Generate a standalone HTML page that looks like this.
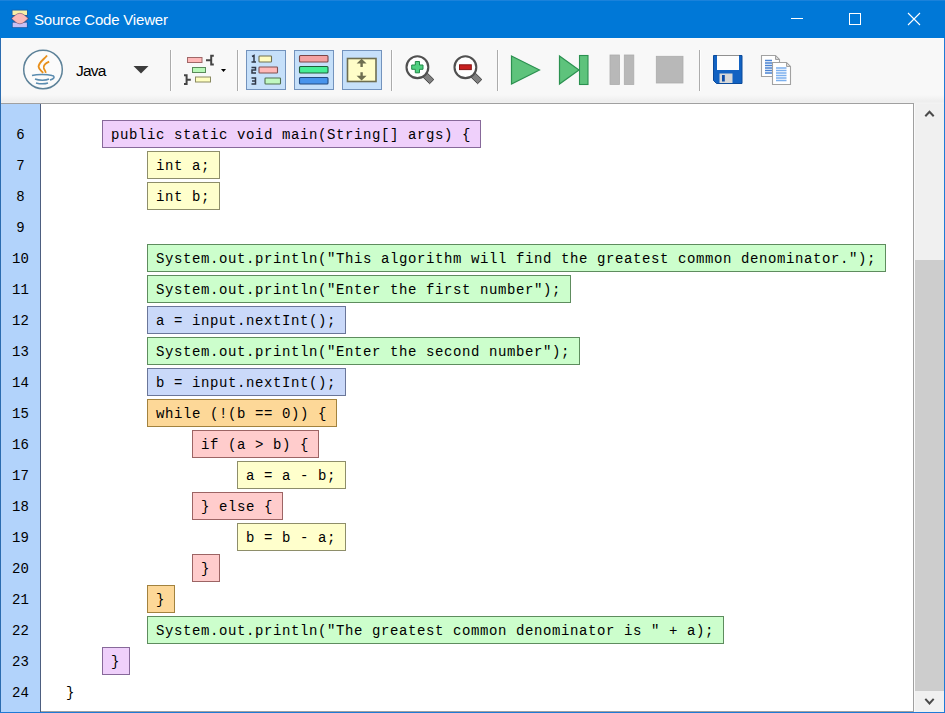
<!DOCTYPE html>
<html><head><meta charset="utf-8">
<style>
*{margin:0;padding:0;box-sizing:border-box}
html,body{width:945px;height:713px;overflow:hidden;background:#fff}
body{position:relative;font-family:"Liberation Sans",sans-serif}
.abs{position:absolute}
#title{left:0;top:0;width:945px;height:38px;background:#0078d7;border-top:1px solid #1a82db}
#ttext{left:34px;top:11px;color:#fff;font-size:15px;line-height:18px;white-space:nowrap;letter-spacing:-0.2px}
#frameL{left:0;top:38px;width:1px;height:675px;background:#2b6cb0}
#frameR{left:944px;top:38px;width:1px;height:675px;background:#1f7ad6}
#frameB{left:0;top:712px;width:945px;height:1px;background:#1f7ad6}
#toolbar{left:1px;top:38px;width:943px;height:66px;background:linear-gradient(#fdfdfd 0px,#f8f8f8 2px,#f8f8f8 57px,#eeeeee 63px,#eeeeee 64px,#f2f2f2 65px)}
#tbline{left:1px;top:103px;width:913px;height:1px;background:#a0a0a0}
#gutter{left:1px;top:104px;width:39px;height:608px;background:#b2d3fb}
#gline{left:40px;top:103px;width:1px;height:609px;background:#4d5e80}
#code{left:41px;top:104px;width:872px;height:607px;background:#fff}
#codeR{left:913px;top:103px;width:1px;height:609px;background:#a0a0a0}
#codeB{left:41px;top:711px;width:873px;height:1px;background:#a0a0a0}
#sb{left:914px;top:104px;width:30px;height:608px;background:#f0f0f0;border-left:1px solid #fafafa}
#thumb{left:915px;top:260px;width:29px;height:431px;background:#cdcdcd}
.sep{position:absolute;top:50px;width:2px;height:41px;border-left:1px solid #acacac;background:#fefefe}
.tbtn{position:absolute;top:50px;width:40px;height:40px;background:#c6e0fa;border:1px solid #7393bd}
.num{position:absolute;left:1px;width:39px;text-align:center;font-family:"Liberation Mono",monospace;font-size:14px;line-height:20px;color:#000}
.bx{position:absolute;height:28px;border:1px solid;padding:0 9px 0 8px;font-family:"Liberation Mono",monospace;font-size:14px;letter-spacing:0.6px;line-height:29px;color:#000;white-space:pre}
.pu{background:#efd0fb;border-color:#87699a}
.ye{background:#ffffcc;border-color:#8e8e6a}
.gr{background:#ccfecc;border-color:#5e8c5e}
.bl{background:#cad9f9;border-color:#6a7699}
.or{background:#fdd898;border-color:#a2823e}
.re{background:#ffcccc;border-color:#9c6464}
.nb{position:absolute;font-family:"Liberation Mono",monospace;font-size:14px;letter-spacing:0.6px;line-height:28px;color:#000;white-space:pre}
</style></head><body>
<div id="title" class="abs"></div>
<svg class="abs" style="left:0;top:0" width="40" height="38" viewBox="0 0 40 38">
  <g fill="#1f4f8c" stroke="#1f4f8c" stroke-width="1.6" stroke-opacity="0.6" fill-opacity="0.6">
    <rect x="12.5" y="10.5" width="14.5" height="4.5"/>
    <rect x="12.7" y="22.6" width="14.2" height="4.6"/>
    <path d="M11.6 18.5 C14.5 16 16.5 13.3 19.9 13.3 C23.3 13.3 25.3 16 28.2 18.5 C25.3 21 23.3 23.8 19.9 23.8 C16.5 23.8 14.5 21 11.6 18.5 Z"/>
  </g>
  <rect x="12.5" y="10.5" width="14.5" height="4.5" fill="#f6f0a8"/>
  <rect x="12.7" y="22.6" width="14.2" height="4.6" fill="#c8c0f4"/>
  <path d="M11.6 18.5 C14.5 16 16.5 13.3 19.9 13.3 C23.3 13.3 25.3 16 28.2 18.5 C25.3 21 23.3 23.8 19.9 23.8 C16.5 23.8 14.5 21 11.6 18.5 Z" fill="#f9b9b9" stroke="#6a4a6a" stroke-opacity="0.7" stroke-width="0.8"/>
</svg>
<div id="ttext" class="abs">Source Code Viewer</div>
<svg class="abs" style="left:780px;top:0" width="165" height="38" viewBox="780 0 165 38">
  <rect x="791" y="18" width="12" height="1" fill="#fff"/>
  <rect x="849.5" y="13.5" width="11" height="11" fill="none" stroke="#fff" stroke-width="1"/>
  <path d="M908 13 L920 25 M920 13 L908 25" stroke="#fff" stroke-width="1.1"/>
</svg>

<div id="toolbar" class="abs"></div>
<div id="frameL" class="abs"></div>
<div id="frameR" class="abs"></div>
<div id="frameB" class="abs"></div>

<!-- toolbar content -->
<svg class="abs" style="left:0;top:38px" width="170" height="65" viewBox="0 38 170 65">
  <circle cx="43" cy="69.5" r="19.3" fill="#fff" fill-opacity="0.4" stroke="#5d8299" stroke-width="1.5"/>
  <path d="M47 55.5 C44.5 59 38.5 62.5 38.6 66.8 C38.8 69.8 42 71 43 73" fill="none" stroke="#e8901c" stroke-width="1.9"/>
  <path d="M49.2 61.6 C46 63 43.2 65 43.8 68 C44.3 70.2 46 71 45.6 73" fill="none" stroke="#e8901c" stroke-width="1.7"/>
  <path d="M32 75.5 C37 74 47 74 52 75.5 C55 76 55 79 50 80" fill="none" stroke="#5a8cb0" stroke-width="1.5"/>
  <path d="M35 79 C39 80.5 46 80.5 49 79" fill="none" stroke="#5a8cb0" stroke-width="1.5"/>
  <path d="M36 83 C40 84 45 84 48 83" fill="none" stroke="#5a8cb0" stroke-width="1.5"/>
  <path d="M133.5 66 L148.5 66 L141 73.5 Z" fill="#3c3c3c"/>
</svg>
<div class="abs" style="left:76px;top:62px;font-size:15.5px;line-height:18px;letter-spacing:-0.8px;color:#000">Java</div>

<div class="sep" style="left:170px"></div>
<svg class="abs" style="left:180px;top:50px" width="50" height="40" viewBox="180 50 50 40">
  <rect x="187.5" y="57.5" width="14.5" height="5" fill="#ffb8b8" stroke="#a06868" stroke-width="1"/>
  <rect x="192.5" y="67.5" width="13" height="5" fill="#b8f8b8" stroke="#5a8a5a" stroke-width="1"/>
  <rect x="195.5" y="77" width="15" height="5" fill="#ffffc0" stroke="#8a8a60" stroke-width="1"/>
  <path d="M206 60.3 H210.5 M213.8 55.8 H211.2 V64.5 H213.8" fill="none" stroke="#444" stroke-width="2"/>
  <path d="M190.8 79.8 H186.5 M184 75.3 H186.6 V84 H184" fill="none" stroke="#444" stroke-width="2"/>
  <path d="M221 69 L226 69 L223.5 72 Z" fill="#000"/>
</svg>
<div class="sep" style="left:237px"></div>

<div class="tbtn" style="left:246px"></div>
<div class="tbtn" style="left:294px"></div>
<div class="tbtn" style="left:342px"></div>
<svg class="abs" style="left:246px;top:50px" width="136" height="40" viewBox="246 50 136 40">
  <!-- btn1 -->
  <path d="M252 56.5 L254 55.5 V62 M251.5 62 H256" fill="none" stroke="#303848" stroke-width="1.5"/>
  <path d="M251.5 67.5 H255.5 V70 H252 V73 H256" fill="none" stroke="#303848" stroke-width="1.5"/>
  <path d="M251.5 78 H255.5 V84 H251.5 M252 81 H255.5" fill="none" stroke="#303848" stroke-width="1.5"/>
  <rect x="259" y="56" width="12.5" height="6" rx="0.8" fill="#fffcc0" stroke="#707050" stroke-width="1.1"/>
  <rect x="259" y="67" width="18.5" height="6" rx="0.8" fill="#ffb8b8" stroke="#805050" stroke-width="1.1"/>
  <rect x="265" y="78" width="15.5" height="6" rx="0.8" fill="#c0f8c0" stroke="#507050" stroke-width="1.1"/>
  <!-- btn2 -->
  <rect x="299.5" y="55.5" width="28.5" height="6.5" rx="1" fill="#f4a2a2" stroke="#7a4646" stroke-width="1.1"/>
  <rect x="299.5" y="66.5" width="28.5" height="6.5" rx="1" fill="#46ee96" stroke="#1f5e38" stroke-width="1.1"/>
  <rect x="299.5" y="77.5" width="28.5" height="6.5" rx="1" fill="#4894ec" stroke="#234a80" stroke-width="1.1"/>
  <!-- btn3 -->
  <rect x="347.5" y="58.5" width="28.5" height="23" fill="#fffdc8" stroke="#6e6e50" stroke-width="1.6"/>
  <path d="M361.6 58.8 L366.6 63.6 H362.8 V67 H360.4 V63.6 H356.6 Z" fill="#6e6e50"/>
  <path d="M361.6 80.6 L366.6 75.8 H362.8 V72.2 H360.4 V75.8 H356.6 Z" fill="#6e6e50"/>
</svg>
<div class="sep" style="left:391px"></div>
<svg class="abs" style="left:400px;top:50px" width="90" height="40" viewBox="400 50 90 40">
  <path d="M422.9 77.1 L427.1 72.9 L433.8 79.5 L429.6 83.7 Z" fill="#808080" stroke="#404040" stroke-width="1"/>
  <circle cx="417.4" cy="67.2" r="10.9" fill="#fff" stroke="#505050" stroke-width="2.1"/>
  <path d="M415.3 61.5 H419.5 V65 H423 V69.3 H419.5 V72.8 H415.3 V69.3 H411.7 V65 H415.3 Z" fill="#50d080" stroke="#208a48" stroke-width="1"/>
  <path d="M470.9 77.1 L475.1 72.9 L481.8 79.5 L477.6 83.7 Z" fill="#808080" stroke="#404040" stroke-width="1"/>
  <circle cx="465.4" cy="67.2" r="10.9" fill="#fff" stroke="#505050" stroke-width="2.1"/>
  <rect x="459.5" y="64.8" width="11.8" height="4.8" fill="#c82020" stroke="#8a1414" stroke-width="1"/>
</svg>
<div class="sep" style="left:497px"></div>
<svg class="abs" style="left:500px;top:50px" width="200" height="40" viewBox="500 50 200 40">
  <path d="M511.5 56 L539.5 70 L511.5 84 Z" fill="#5ec37c" stroke="#2b9150" stroke-width="1.2"/>
  <path d="M559.5 56 L579 70 L559.5 84 Z" fill="#5ec37c" stroke="#2b9150" stroke-width="1.2"/>
  <rect x="579.5" y="55.5" width="8.5" height="29" fill="#5ec37c" stroke="#2b9150" stroke-width="1.1"/>
  <rect x="610" y="55" width="9.5" height="29.5" fill="#b8b8b8" stroke="#acacac" stroke-width="0.8"/>
  <rect x="624.3" y="55" width="9.5" height="29.5" fill="#b8b8b8" stroke="#acacac" stroke-width="0.8"/>
  <rect x="656.3" y="56.3" width="26.7" height="26.7" fill="#b8b8b8" stroke="#acacac" stroke-width="0.8"/>
</svg>
<div class="sep" style="left:699px"></div>
<svg class="abs" style="left:705px;top:50px" width="95" height="40" viewBox="705 50 95 40">
  <path d="M713.5 55.5 H742 V83.5 H716.5 L713.5 80.5 Z" fill="#1262c2" stroke="#0b4a9a" stroke-width="1"/>
  <rect x="717" y="55.5" width="22" height="14.5" fill="#fdfdfd"/>
  <rect x="717" y="55" width="22" height="1" fill="#909090"/>
  <rect x="719.5" y="73.5" width="13" height="9.5" fill="#d8d8d8"/>
  <rect x="722" y="75" width="2.8" height="6.5" fill="#0c4ca8"/>
  <!-- copy -->
  <path d="M761.5 55.5 H775.5 L779.5 59.5 V76.5 H761.5 Z" fill="#fff" stroke="#a2a2a2" stroke-width="1.1"/>
  <path d="M775.5 55.5 V59.5 H779.5 Z" fill="#d8d8d8" stroke="#a2a2a2" stroke-width="1"/>
  <g stroke="#4a82d2" stroke-width="1.5">
    <path d="M765 60.5 H772 M765 63 H772 M765 65.5 H772 M765 68 H772 M765 70.5 H772 M765 73 H772"/>
  </g>
  <path d="M772.5 62.5 H786.5 L790.5 66.5 V84.5 H772.5 Z" fill="#fff" stroke="#a2a2a2" stroke-width="1.1"/>
  <path d="M786.5 62.5 V66.5 H790.5 Z" fill="#d8d8d8" stroke="#a2a2a2" stroke-width="1"/>
  <g stroke="#7cb0ee" stroke-width="1.4">
    <path d="M776 68 H786.5 M776 70.5 H786.5 M776 73 H786.5 M776 75.5 H786.5 M776 78 H786.5 M776 80.5 H786.5"/>
  </g>
</svg>

<!-- editor -->
<div id="gutter" class="abs"></div>
<div id="gline" class="abs"></div>
<div id="code" class="abs"></div>
<div id="tbline" class="abs"></div>
<div id="codeR" class="abs"></div>
<div id="codeB" class="abs"></div>
<div id="sb" class="abs"></div>
<div id="thumb" class="abs"></div>
<svg class="abs" style="left:914px;top:104px" width="30" height="608" viewBox="914 104 30 608">
  <path d="M925.3 116.2 L929.5 111.8 L933.7 116.2" fill="none" stroke="#4a4a4a" stroke-width="2"/>
  <path d="M925.3 698.8 L929.5 703.4 L933.7 698.8" fill="none" stroke="#4a4a4a" stroke-width="2"/>
</svg>

<div class="num" style="top:125px">6</div>
<div class="num" style="top:156px">7</div>
<div class="num" style="top:187px">8</div>
<div class="num" style="top:218px">9</div>
<div class="num" style="top:249px">10</div>
<div class="num" style="top:280px">11</div>
<div class="num" style="top:311px">12</div>
<div class="num" style="top:342px">13</div>
<div class="num" style="top:373px">14</div>
<div class="num" style="top:404px">15</div>
<div class="num" style="top:435px">16</div>
<div class="num" style="top:466px">17</div>
<div class="num" style="top:497px">18</div>
<div class="num" style="top:528px">19</div>
<div class="num" style="top:559px">20</div>
<div class="num" style="top:590px">21</div>
<div class="num" style="top:621px">22</div>
<div class="num" style="top:652px">23</div>
<div class="num" style="top:683px">24</div>

<div class="bx pu" style="left:102px;top:120px">public static void main(String[] args) {</div>
<div class="bx ye" style="left:147px;top:151px">int a;</div>
<div class="bx ye" style="left:147px;top:182px">int b;</div>
<div class="bx gr" style="left:147px;top:244px">System.out.println("This algorithm will find the greatest common denominator.");</div>
<div class="bx gr" style="left:147px;top:275px">System.out.println("Enter the first number");</div>
<div class="bx bl" style="left:147px;top:306px">a = input.nextInt();</div>
<div class="bx gr" style="left:147px;top:337px">System.out.println("Enter the second number");</div>
<div class="bx bl" style="left:147px;top:368px">b = input.nextInt();</div>
<div class="bx or" style="left:147px;top:399px">while (!(b == 0)) {</div>
<div class="bx re" style="left:192px;top:430px">if (a &gt; b) {</div>
<div class="bx ye" style="left:237px;top:461px">a = a - b;</div>
<div class="bx re" style="left:192px;top:492px">} else {</div>
<div class="bx ye" style="left:237px;top:523px">b = b - a;</div>
<div class="bx re" style="left:192px;top:554px">}</div>
<div class="bx or" style="left:147px;top:585px">}</div>
<div class="bx gr" style="left:147px;top:616px">System.out.println("The greatest common denominator is " + a);</div>
<div class="bx pu" style="left:102px;top:647px">}</div>
<div class="nb" style="left:66px;top:679px">}</div>
</body></html>
